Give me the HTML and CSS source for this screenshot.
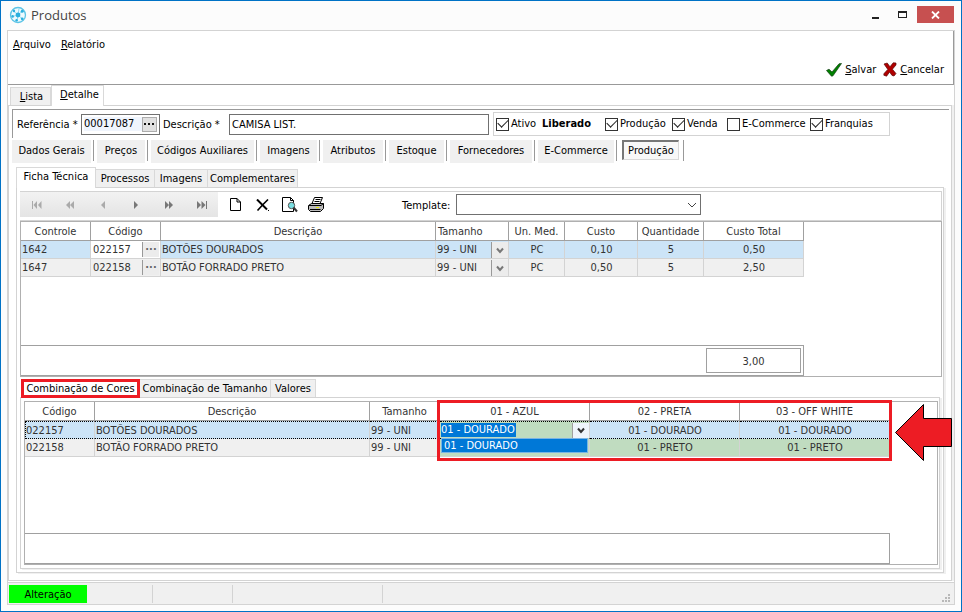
FILE: index.html
```
<!DOCTYPE html>
<html lang="pt-BR">
  <head>
    <meta charset="UTF-8" />
    <title>Produtos</title>
    <link rel="stylesheet" href="styles.css">
  </head>
  <body>
    <svg class="defs" aria-hidden="true">
      <symbol id="chevron" viewBox="0 0 10 6">
        <path d="M1 1 L5 5 L9 1" fill="none" stroke="currentColor" />
      </symbol>
      <symbol id="chevron-bold" viewBox="0 0 8 7">
        <path d="M1 1.5 L4 5 L7 1.5" fill="none" stroke="currentColor" stroke-width="2" />
      </symbol>
    </svg>

    <header class="titlebar">
      <svg class="logo" width="18" height="18" viewBox="0 0 18 18">
        <circle cx="9" cy="9" r="7.5" fill="#eefafe" stroke="#5cc4e6" stroke-width="1.3" />
        <path d="M9 9 L4.5 5 M9 9 L13.5 5 M9 9 L3.5 10.5 M9 9 L13.5 13 M9 9 L8 14.5 M9 9 L10 2.5" stroke="#8fd8f0" fill="none" />
        <g fill="#2bb0de">
          <circle cx="9" cy="9" r="2.4" />
          <circle cx="5" cy="5" r="1.2" />
          <circle cx="13.2" cy="5.2" r="1.5" />
          <circle cx="3.6" cy="10.4" r="1.3" />
          <circle cx="13.2" cy="12.8" r="1.4" />
          <circle cx="7.6" cy="14.2" r="1.2" />
        </g>
      </svg>
      <h1>Produtos</h1>
      <button class="win-btn" aria-label="Minimizar">
        <svg width="9" height="9" viewBox="0 0 9 9"><path d="M1 7h7v2H1z" fill="#222" /></svg>
      </button>
      <button class="win-btn" aria-label="Maximizar">
        <svg width="9" height="7" viewBox="0 0 9 7"><path d="M0 0h9v7H0z M1 2v4h7V2z" fill="#222" fill-rule="evenodd" /></svg>
      </button>
      <button class="win-btn close" aria-label="Fechar">
        <svg width="9" height="8" viewBox="0 0 9 8"><path d="M1 0.5 L8 7.5 M8 0.5 L1 7.5" stroke="#fff" stroke-width="1.8" /></svg>
      </button>
    </header>

    <main class="client">
      <div class="topbar">
        <nav class="menu">
          <a href="#"><u>A</u>rquivo</a>
          <a href="#"><u>R</u>elatório</a>
        </nav>
        <div class="actions">
          <button>
            <svg width="16" height="14" viewBox="0 0 16 14">
              <path d="M0.5 7.5 L3 6.2 L6 9 L13 0.8 L15.5 0.5 L7 12.8 L5.5 13.2 Z" fill="#008000" stroke="#123d12" stroke-width="0.7" />
            </svg>
            <span><u>S</u>alvar</span>
          </button>
          <button>
            <svg width="14" height="15" viewBox="0 0 14 15">
              <path d="M1 2 L4.2 1 L7 4.8 L10.2 0.8 L13 1 L13 3 L9.4 7.2 L13 11.6 L11 14 L9 13.4 L6.6 10 L3.6 14.2 L0.8 13.2 L1 11.6 L4.8 7.4 Z" fill="#b00000" stroke="#5a0c0c" stroke-width="0.7" />
            </svg>
            <span><u>C</u>ancelar</span>
          </button>
        </div>
      </div>

      <nav class="tabs tabs-main">
        <button class="tab"><u>L</u>ista</button>
        <button class="tab active"><u>D</u>etalhe</button>
      </nav>

      <section class="page">
        <form class="product">
          <label for="ref">Referência *</label>
          <div class="field field-ref">
            <input id="ref" type="text" value="00017087" />
            <button type="button" aria-label="Procurar">
              <svg width="11" height="2" viewBox="0 0 11 2"><path d="M0 0h2v2H0z M4 0h2v2H4z M8 0h2v2H8z" fill="#111" /></svg>
            </button>
          </div>
          <label for="desc" class="label-desc">Descrição *</label>
          <input id="desc" class="field field-desc" type="text" value="CAMISA LIST." />
          <div class="flags">
            <label><input type="checkbox" checked />Ativo</label>
            <strong>Liberado</strong>
            <label><input type="checkbox" checked />Produção</label>
            <label><input type="checkbox" checked />Venda</label>
            <label><input type="checkbox" />E-Commerce</label>
            <label><input type="checkbox" checked />Franquias</label>
          </div>
        </form>

        <ul class="sections">
          <li><button>Dados Gerais</button></li>
          <li><button>Preços</button></li>
          <li><button>Códigos Auxiliares</button></li>
          <li><button>Imagens</button></li>
          <li><button>Atributos</button></li>
          <li><button>Estoque</button></li>
          <li><button>Fornecedores</button></li>
          <li><button>E-Commerce</button></li>
          <li><button class="pressed">Produção</button></li>
        </ul>

        <nav class="tabs tabs-sheet">
          <button class="tab active">Ficha Técnica</button>
          <button class="tab">Processos</button>
          <button class="tab">Imagens</button>
          <button class="tab">Complementares</button>
        </nav>

        <div class="panel panel-sheet">
          <div class="toolbar">
            <div class="navigator">
              <button disabled aria-label="Primeiro"><svg width="10" height="8" viewBox="0 0 10 8"><path d="M0 0h1v8H0z M5 0v8L1.5 4z M9.5 0v8L6 4z" /></svg></button>
              <button disabled aria-label="Página anterior"><svg width="8" height="8" viewBox="0 0 8 8"><path d="M4 0v8L0 4z M8 0v8L4 4z" /></svg></button>
              <button disabled aria-label="Anterior"><svg width="4" height="8" viewBox="0 0 4 8"><path d="M4 0v8L0 4z" /></svg></button>
              <button aria-label="Próximo"><svg width="4" height="8" viewBox="0 0 4 8"><path d="M0 0v8l4-4z" /></svg></button>
              <button aria-label="Próxima página"><svg width="8" height="8" viewBox="0 0 8 8"><path d="M0 0v8l4-4z M4 0v8l4-4z" /></svg></button>
              <button aria-label="Último"><svg width="10" height="8" viewBox="0 0 10 8"><path d="M0 0v8l4-4z M4.5 0v8l4-4z M9 0h1v8H9z" /></svg></button>
            </div>
            <div class="tools">
              <button aria-label="Novo">
                <svg width="11" height="13" viewBox="0 0 11 13"><path d="M0.5 0.5h6.5l3.5 3.5v8.5h-10z M7 0.5v3.5h3.5" fill="#fff" stroke="#000" /></svg>
              </button>
              <button aria-label="Excluir">
                <svg width="13" height="12" viewBox="0 0 13 12">
                  <path d="M1 0.5 L11 10.5" fill="none" stroke="#000" stroke-width="2" />
                  <path d="M12 0.5 L7 5.5 L1.5 11.5" fill="none" stroke="#000" stroke-width="1.6" />
                  <path d="M12 11h1v1h-1z" fill="#000" />
                </svg>
              </button>
              <button aria-label="Visualizar">
                <svg width="16" height="16" viewBox="0 0 16 16">
                  <path d="M0.5 0.5h8l3 3v11h-11z M8.5 0.5v3h3" fill="#fff" stroke="#000" />
                  <circle cx="9.5" cy="8.5" r="3.2" fill="#7adfe2" stroke="#555" />
                  <path d="M11.5 10.5 L15 14.5" stroke="#333" stroke-width="2" />
                </svg>
              </button>
              <button aria-label="Imprimir">
                <svg width="17" height="15" viewBox="0 0 17 15">
                  <path d="M6.5 0.5h8l-2.5 6h-8z" fill="#fff" stroke="#000" />
                  <path d="M7.5 2.5h5 M6.5 4.5h5" stroke="#000" />
                  <path d="M0.5 8.5 L3.5 6.5h12v5l-3 3h-10l-2-2z" fill="#bbb" stroke="#000" />
                  <path d="M1 8.5h12l2.5-2 M2 12.5h10.5" fill="none" stroke="#000" />
                  <path d="M8 10.5h3" stroke="#e8e800" />
                </svg>
              </button>
            </div>
            <label for="template">Template:</label>
            <div class="combo combo-template">
              <select id="template"><option></option></select>
              <svg width="10" height="6"><use href="#chevron" /></svg>
            </div>
          </div>

          <div class="grid grid-items">
            <div class="sheet">
              <table>
                <colgroup>
                  <col class="w70" /><col class="w70" /><col class="w275" /><col class="w73" />
                  <col class="w56" /><col class="w73" /><col class="w66" /><col class="w100" />
                </colgroup>
                <thead>
                  <tr>
                    <th>Controle</th>
                    <th>Código</th>
                    <th>Descrição</th>
                    <th class="left">Tamanho</th>
                    <th>Un. Med.</th>
                    <th>Custo</th>
                    <th>Quantidade</th>
                    <th>Custo Total</th>
                  </tr>
                </thead>
                <tbody>
                  <tr class="current">
                    <td>1642</td>
                    <td class="editing">
                      <div class="lookup">
                        <input type="text" value="022157" aria-label="Código" />
                        <button aria-label="Procurar código">···</button>
                      </div>
                    </td>
                    <td>BOTÕES DOURADOS</td>
                    <td>
                      <div class="combo combo-cell">
                        <select aria-label="Tamanho"><option>99 - UNI</option></select>
                        <svg width="8" height="7"><use href="#chevron-bold" /></svg>
                      </div>
                    </td>
                    <td class="center">PC</td>
                    <td class="center">0,10</td>
                    <td class="center">5</td>
                    <td class="center">0,50</td>
                  </tr>
                  <tr>
                    <td>1647</td>
                    <td>
                      <div class="lookup">
                        <input type="text" value="022158" aria-label="Código" />
                        <button aria-label="Procurar código">···</button>
                      </div>
                    </td>
                    <td>BOTÃO FORRADO PRETO</td>
                    <td>
                      <div class="combo combo-cell">
                        <select aria-label="Tamanho"><option>99 - UNI</option></select>
                        <svg width="8" height="7"><use href="#chevron-bold" /></svg>
                      </div>
                    </td>
                    <td class="center">PC</td>
                    <td class="center">0,50</td>
                    <td class="center">5</td>
                    <td class="center">2,50</td>
                  </tr>
                </tbody>
              </table>
              <div class="summary"><output>3,00</output></div>
            </div>
          </div>

          <nav class="tabs tabs-combo">
            <button class="tab active marked">Combinação de Cores</button>
            <button class="tab">Combinação de Tamanho</button>
            <button class="tab">Valores</button>
          </nav>

          <div class="panel panel-combo">
            <div class="grid grid-colors">
              <div class="sheet">
                <table>
                  <colgroup>
                    <col class="w70" /><col class="w275" /><col class="w70" />
                    <col class="w150" /><col class="w150" /><col class="w150" />
                  </colgroup>
                  <thead>
                    <tr>
                      <th>Código</th>
                      <th>Descrição</th>
                      <th>Tamanho</th>
                      <th>01 - AZUL</th>
                      <th>02 - PRETA</th>
                      <th>03 - OFF WHITE</th>
                    </tr>
                  </thead>
                  <tbody>
                    <tr class="current focused">
                      <td>022157</td>
                      <td>BOTÕES DOURADOS</td>
                      <td>99 - UNI</td>
                      <td class="color">
                        <div class="color-edit">
                          <input type="text" value="01 - DOURADO" aria-label="Cor" />
                          <button aria-label="Abrir lista">
                            <svg width="8" height="7"><use href="#chevron-bold" /></svg>
                          </button>
                          <ul class="options">
                            <li>01 - DOURADO</li>
                          </ul>
                        </div>
                      </td>
                      <td class="center">01 - DOURADO</td>
                      <td class="center">01 - DOURADO</td>
                    </tr>
                    <tr>
                      <td>022158</td>
                      <td>BOTÃO FORRADO PRETO</td>
                      <td>99 - UNI</td>
                      <td class="color"></td>
                      <td class="color center">01 - PRETO</td>
                      <td class="color center">01 - PRETO</td>
                    </tr>
                  </tbody>
                </table>
                <div class="summary"></div>
                <div class="highlight"></div>
                <svg class="arrow" width="58" height="58" viewBox="0 0 58 58">
                  <path d="M0.5 28.5 L28.5 0.5 V14.5 H56.5 V42.5 H28.5 V56.5 Z" fill="#ed1c24" stroke="#000" />
                </svg>
              </div>
            </div>
          </div>
        </div>
      </section>

      <footer class="status">
        <span class="state">Alteração</span>
        <span class="cell w66"></span>
        <span class="cell w80"></span>
        <span class="cell w150"></span>
        <svg class="grip" width="9" height="9" viewBox="0 0 9 9">
          <path d="M6 0h2v2H6z M3 3h2v2H3z M6 3h2v2H6z M0 6h2v2H0z M3 6h2v2H3z M6 6h2v2H6z" fill="#b8b8b8" />
        </svg>
      </footer>
    </main>
  </body>
</html>
```
FILE: styles.css
```
* {
  box-sizing: border-box;
}

body {
  margin: 0;
  height: 100vh;
  padding: 0 6px 6px;
  border: 1px solid #0072c6;
  background: #fcfcfc;
  font-family: "DejaVu Sans Condensed", "DejaVu Sans", sans-serif;
  font-size: 11px;
  line-height: 14px;
  color: #000;
  display: flex;
  flex-direction: column;
  overflow: hidden;
}

button,
input,
select {
  font: inherit;
  color: inherit;
  margin: 0;
  padding: 0;
  border: none;
  border-radius: 0;
  background: none;
  outline: none;
}

svg {
  display: block;
  flex: none;
}

ul {
  list-style: none;
  margin: 0;
  padding: 0;
}

.defs {
  position: absolute;
  width: 0;
  height: 0;
}

/* title bar */
.titlebar {
  flex: none;
  height: 29px;
  padding: 0 1px 2px 2px;
  display: flex;
  align-items: center;
}

.titlebar h1 {
  flex: 1;
  margin: 0;
  padding-left: 4px;
  font-family: "Open Sans", sans-serif;
  font-size: 13px;
  font-weight: 400;
  line-height: 18px;
  color: #444;
}

.win-btn {
  width: 27px;
  height: 17px;
  display: flex;
  align-items: center;
  justify-content: center;
}

.win-btn.close {
  width: 37px;
  margin-left: 1px;
  background: #c75050;
}

/* client area */
.client {
  flex: 1;
  min-height: 0;
  border: 1px solid #d3d3d3;
  background: #fff;
  display: flex;
  flex-direction: column;
}

.topbar {
  flex: none;
  height: 54px;
  padding: 7px 9px 0 5px;
  border-right: 1px solid #999;
  border-bottom: 1px solid #999;
}

.menu {
  display: flex;
  gap: 10px;
}

.menu a {
  color: #000;
  text-decoration: none;
}

.actions {
  display: flex;
  justify-content: flex-end;
  gap: 7px;
  padding-top: 10px;
}

.actions button {
  display: flex;
  align-items: center;
  gap: 3px;
}

/* tabs */
.tabs {
  flex: none;
  height: 20px;
  display: flex;
  align-items: flex-end;
}

.tab {
  height: 18px;
  padding-top: 1px;
  border: 1px solid #d9d9d9;
  border-bottom: none;
  border-left: none;
  background: #f0f0f0;
  white-space: nowrap;
}

.tab.active {
  height: 21px;
  margin-bottom: -1px;
  padding-bottom: 3px;
  border-left: 1px solid #d9d9d9;
  background: #fff;
  z-index: 1;
}

.tabs-main {
  padding-left: 2px;
}

.tabs-main .tab {
  width: 41px;
  padding-left: 2px;
  border-left: 1px solid #d9d9d9;
}

.tabs-main .tab.active {
  width: 53px;
  padding-left: 4px;
}

/* detail page */
.page {
  flex: 1;
  min-height: 0;
  margin: 0 2px 1px 0;
  padding: 3px 2px 7px 3px;
  border: 1px solid #d3d3d3;
  box-shadow: 2px 0 0 #f0f0f0;
  display: flex;
  flex-direction: column;
}

.product {
  flex: none;
  height: 29px;
  padding-left: 4px;
  border-top: 1px solid #999;
  border-left: 1px solid #999;
  display: flex;
  align-items: center;
}

.product > label {
  width: 64px;
  padding-top: 2px;
  white-space: nowrap;
}

.product > .label-desc {
  width: 66px;
}

.field {
  height: 21px;
  border: 1px solid #707070;
  padding: 0 2px;
}

.field-ref {
  width: 79px;
  margin-right: 3px;
  display: flex;
  align-items: center;
}

.field-ref input {
  flex: 1;
  min-width: 0;
  background: #f0f5fd;
}

.field-ref button {
  width: 15px;
  height: 15px;
  border: 1px solid #acacac;
  background: #e1e1e1;
  display: flex;
  align-items: center;
  justify-content: center;
}

.field-desc {
  width: 260px;
}

.flags {
  height: 24px;
  margin-left: 4px;
  padding-left: 2px;
  border: 1px solid #d3d3d3;
  display: grid;
  grid-template-columns: 46px 63px 67px 55px 83px 79px;
  align-items: center;
}

.flags label {
  display: flex;
  align-items: center;
  gap: 2px;
  white-space: nowrap;
}

.flags input {
  appearance: none;
  flex: none;
  width: 13px;
  height: 13px;
  border: 1px solid #333;
  background: #fff;
  display: grid;
  place-items: center;
}

.flags input:checked::after {
  content: "";
  width: 9px;
  height: 5px;
  margin-bottom: 4px;
  border-left: 1px solid #222;
  border-bottom: 1px solid #222;
  transform: rotate(-45deg);
}

/* section buttons */
.sections {
  flex: none;
  margin-top: 2px;
  height: 23px;
  display: grid;
  grid-template-columns: 82px 51px 106px 60px 63px 58px 85px 79px 64px;
  gap: 3px;
}

.sections li {
  height: 21px;
  padding-right: 2px;
  border-right: 1px solid #999;
}

.sections button {
  width: 100%;
  height: 23px;
  padding-bottom: 2px;
  background: #f0f0f0;
  white-space: nowrap;
}

.sections .pressed {
  width: 57px;
  height: 20px;
  margin-left: 2px;
  padding: 0;
  border: 1px solid #d9d9d9;
  border-top: 2px solid #777;
  border-left: 2px solid #777;
  background: #f8f8f8;
}

.tabs-sheet {
  margin: 4px 0 0 4px;
}

.tabs-sheet .tab {
  width: 59px;
}

.tabs-sheet .tab:nth-child(1) {
  width: 80px;
}

.tabs-sheet .tab:nth-child(3) {
  width: 53px;
}

.tabs-sheet .tab:nth-child(4) {
  width: 90px;
}

.panel {
  flex: 1;
  min-height: 0;
  border: 1px solid #d3d3d3;
  box-shadow: 2px 1px 0 #f0f0f0;
  display: flex;
  flex-direction: column;
}

.panel-sheet {
  margin: 0 5px 0 4px;
  padding: 3px 1px 3px 3px;
}

/* toolbar */
.toolbar {
  flex: none;
  height: 30px;
  border: 1px solid #d3d3d3;
  border-left: none;
  display: flex;
  align-items: flex-start;
}

.navigator {
  display: grid;
  grid-template-columns: repeat(6, 33px);
  height: 25px;
  background: linear-gradient(#f2f2f2, #e4e4e4);
}

.navigator button,
.tools button {
  display: flex;
  align-items: center;
  justify-content: center;
}

.navigator svg {
  fill: #777;
}

.navigator button:disabled svg {
  fill: #aaa;
}

.tools {
  display: grid;
  grid-template-columns: repeat(4, 27px);
  height: 25px;
  margin-left: 4px;
}

.toolbar label {
  width: 54px;
  margin: 7px 0 0 72px;
}

/* drop-downs */
.combo {
  display: grid;
  grid-template-columns: 1fr auto;
  align-items: center;
}

.combo select {
  grid-area: 1 / 1 / 2 / 3;
  appearance: none;
  width: 100%;
  height: 100%;
}

.combo svg {
  grid-area: 1 / 2;
  pointer-events: none;
}

.combo-template {
  width: 245px;
  height: 21px;
  margin-top: 2px;
  padding-right: 3px;
  border: 1px solid #707070;
  color: #444;
}

.combo-cell {
  height: 16px;
  padding-right: 4px;
  background: linear-gradient(90deg, transparent 54px, #999 54px, #999 55px, #ececec 55px);
}

.combo-cell svg {
  color: #777;
}

/* data grids */
.grid {
  border: 1px solid #b0b0b0;
  display: flex;
}

.grid-items {
  flex: none;
  height: 156px;
}

.grid-colors {
  flex: 1;
}

.sheet {
  position: relative;
  display: flex;
  flex-direction: column;
}

table {
  table-layout: fixed;
  width: 0;
  border-collapse: separate;
  border-spacing: 0;
  color: #333;
}

.w56 {
  width: 56px;
}

.w66 {
  width: 66px;
}

.w70 {
  width: 70px;
}

.w73 {
  width: 73px;
}

.w80 {
  width: 80px;
}

.w100 {
  width: 100px;
}

.w150 {
  width: 150px;
}

.w275 {
  width: 275px;
}

th {
  height: 19px;
  padding: 2px 2px 0;
  border-right: 1px solid #a0a0a0;
  border-bottom: 1px solid #a0a0a0;
  font-weight: 400;
  text-align: center;
  white-space: nowrap;
}

th.left {
  text-align: left;
}

td {
  height: 18px;
  padding: 1px 0 0 1px;
  border-right: 1px solid #d3d3d3;
  border-bottom: 1px solid #d3d3d3;
  background: #f0f0f0;
  white-space: nowrap;
}

.current td {
  background: #cce4f7;
}

td.center {
  text-align: center;
}

td.color,
.current td.color {
  background: #c0dcc0;
}

.current td.editing {
  background: #fff;
}

.focused td {
  border-top: 1px dotted #000;
  border-bottom: 1px dotted #000;
}

.focused td:first-child {
  border-left: 1px dotted #000;
  padding-left: 0;
}

.focused td:last-child {
  border-right: 1px dotted #000;
}

.lookup {
  display: flex;
  height: 16px;
}

.lookup input {
  flex: 1;
  min-width: 0;
  padding-left: 1px;
}

.lookup button {
  width: 17px;
  height: 15px;
  margin-right: 1px;
  border-left: 1px solid #999;
  background: #ececec;
  color: #666;
  line-height: 12px;
  font-weight: 700;
}

.summary {
  height: 31px;
  margin-top: auto;
  padding: 2px;
  border-top: 1px solid #a0a0a0;
  border-right: 1px solid #a0a0a0;
  border-bottom: 1px solid #a0a0a0;
  color: #333;
  display: flex;
  justify-content: flex-end;
}

.summary output {
  width: 95px;
  height: 25px;
  padding-top: 2px;
  border: 1px solid #a0a0a0;
  display: grid;
  place-items: center;
}

.tabs-combo .tab {
  width: 131px;
}

.tabs-combo .tab:nth-child(3) {
  width: 45px;
}

.tabs-combo .tab.marked {
  width: 119px;
  height: 19px;
  margin-left: 1px;
  padding: 0;
  border: 3px solid #ed1c24;
}

.panel-combo {
  margin-right: 2px;
  padding: 3px 1px 3px 3px;
}

/* colour editor */
.color-edit {
  position: relative;
  display: flex;
  justify-content: space-between;
  height: 15px;
}

.color-edit input {
  width: 75px;
  height: 14px;
  background: #0078d7;
  color: #fff;
}

.color-edit button {
  width: 17px;
  border-left: 1px solid #a0a0a0;
  background: #eef4fb;
  display: grid;
  place-items: center;
}

.options {
  position: absolute;
  top: 15px;
  left: 0;
  right: 1px;
  padding-left: 2px;
  background: #0078d7;
  border: 1px solid #7ab4e4;
  color: #fff;
  line-height: 13px;
}

/* callouts over the colour columns */
.highlight {
  position: absolute;
  top: -2px;
  left: 412px;
  width: 455px;
  height: 61px;
  border: 3px solid #ed1c24;
}

.arrow {
  position: absolute;
  top: 2px;
  left: 870px;
}

/* status bar */
.status {
  flex: none;
  height: 22px;
  padding: 2px 3px 1px 1px;
  border-top: 1px solid #d3d3d3;
  background: #f0f0f0;
  display: flex;
}

.status .state {
  width: 78px;
  padding-top: 1px;
  background: #00ff00;
  text-align: center;
  line-height: 18px;
}

.status .cell {
  border-right: 1px solid #d3d3d3;
}

.status .grip {
  align-self: flex-end;
  margin-left: auto;
}
```
